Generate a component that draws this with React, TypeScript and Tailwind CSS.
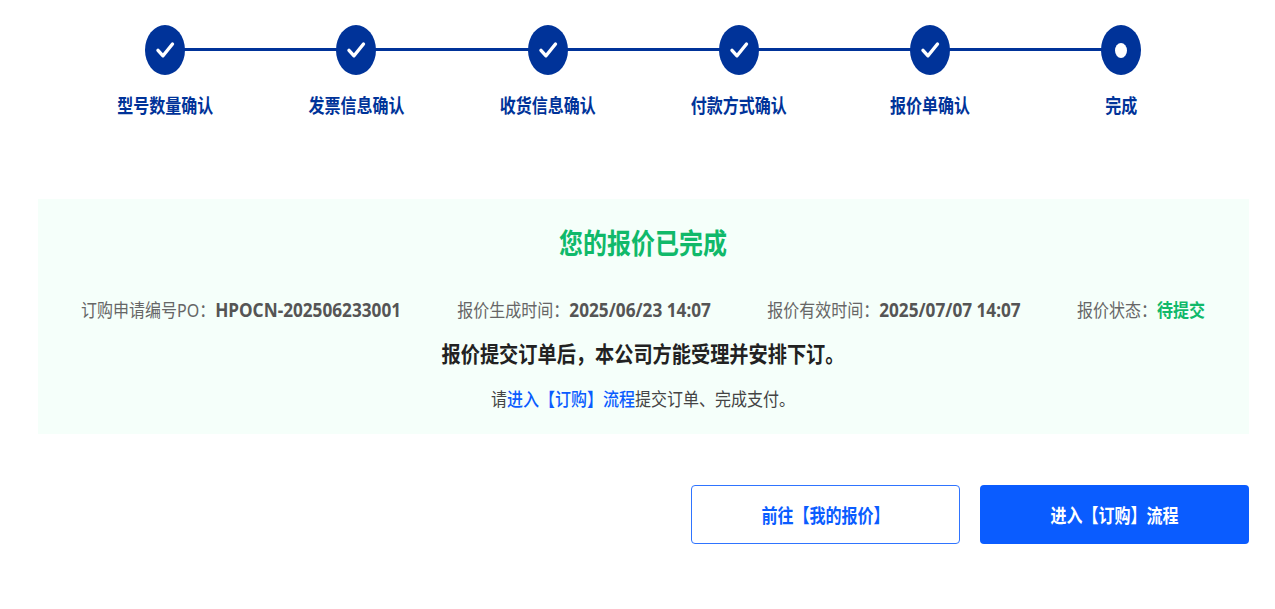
import React from 'react';

const steps = ['型号数量确认', '发票信息确认', '收货信息确认', '付款方式确认', '报价单确认', '完成'];

const CheckIcon = () => (
  <svg width="20" height="20" viewBox="0 0 20 20" fill="none">
    <path d="M3 10.3 L8 15.8 L17.5 4" stroke="#fff" strokeWidth="3.4" strokeLinecap="round" strokeLinejoin="round" />
  </svg>
);

const Step: React.FC<{ label: string; index: number }> = ({ label, index }) => {
  const last = index === steps.length - 1;
  return (
    <div className="relative flex flex-col items-center">
      {!last && <div className="absolute left-1/2 top-[23px] h-[3px] w-full bg-[#003399]" />}
      <div className="relative z-10 flex h-[50px] w-10 items-center justify-center rounded-[50%] bg-[#003399]">
        {last ? <div className="h-[15px] w-3 rounded-[50%] bg-white" /> : <CheckIcon />}
      </div>
      <div className="mt-[18px] scale-y-[1.2] text-base leading-[26px] font-bold text-[#003399]">{label}</div>
    </div>
  );
};

const Info: React.FC<{ label: string; value: string; green?: boolean }> = ({ label, value, green }) => (
  <div className="scale-y-[1.15] text-[#666666]">
    {label}{'\uFF1A'}
    <span className={green ? 'font-bold text-[#10b96a]' : 'text-[17.2px] font-bold text-[#555555]'}>{value}</span>
  </div>
);

export default function App() {
  return (
    <div className="min-h-screen bg-white pt-[25px] font-['Noto_Sans','Noto_Sans_CJK_SC',sans-serif]">
      <div className="ml-[69.75px] grid w-[1147px] grid-cols-6">
        {steps.map((s, i) => (
          <Step key={s} label={s} index={i} />
        ))}
      </div>

      <div className="mt-[80px] mr-[26px] ml-[38px] flex h-[235px] flex-col items-center bg-[#f5fffa] pt-[24px] pr-[44px] pl-[43px]">
        <h1 className="scale-y-[1.2] text-2xl leading-[40px] font-bold text-[#10b96a]">您的报价已完成</h1>
        <div className="mt-[34px] flex w-full justify-between text-base leading-[26px]">
          <Info label="订购申请编号PO" value="HPOCN-202506233001" />
          <Info label="报价生成时间" value="2025/06/23 14:07" />
          <Info label="报价有效时间" value="2025/07/07 14:07" />
          <Info label="报价状态" value="待提交" green />
        </div>
        <p className="mt-[17px] scale-y-[1.15] text-[19.2px] leading-[28px] font-bold text-[#222222]">
          报价提交订单后{'\uFF0C'}本公司方能受理并安排下订。
        </p>
        <p className="mt-[18px] scale-y-[1.15] text-base leading-[26px] text-[#444444]">
          请<span className="font-medium text-[#0a5cff]">进入【订购】流程</span>提交订单、完成支付。
        </p>
      </div>

      <div className="mt-[51px] mr-[26px] flex justify-end gap-5">
        <button className="h-[59px] w-[269px] rounded-[4px] border border-[#2f74ff] bg-white pt-[2px] text-base font-bold text-[#0a5cff]">
          <span className="inline-block scale-y-[1.2]">前往【我的报价】</span>
        </button>
        <button className="h-[59px] w-[269px] rounded-[4px] bg-[#0a5cff] pt-[2px] text-base font-bold text-white">
          <span className="inline-block scale-y-[1.2]">进入【订购】流程</span>
        </button>
      </div>
    </div>
  );
}
